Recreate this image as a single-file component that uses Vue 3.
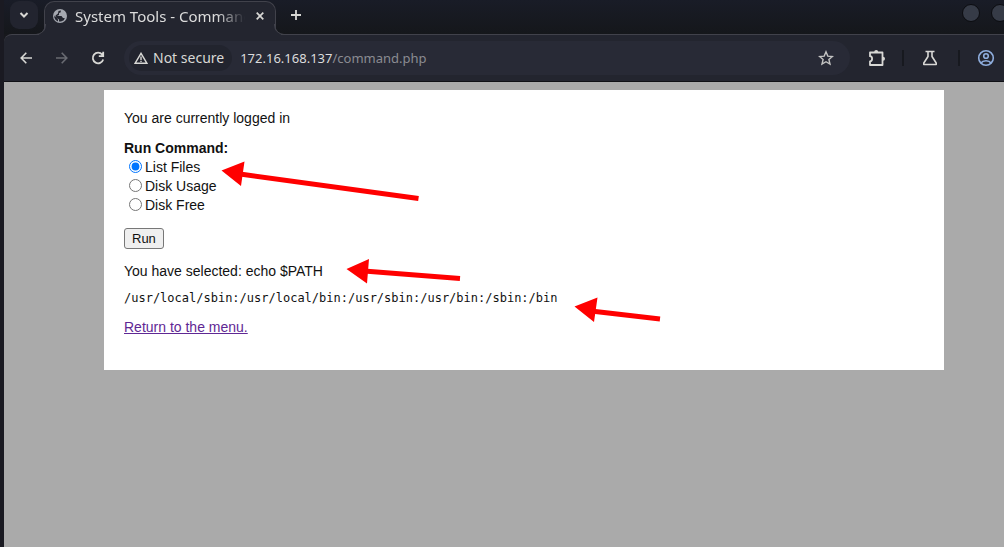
<script setup>
import { ref } from 'vue'

const commands = ['List Files', 'Disk Usage', 'Disk Free']
const selected = ref('List Files')
const address = ref('172.16.168.137/command.php')
</script>

<template>
  <div class="window">
    <header class="tabstrip">
      <button class="tab-search" type="button" aria-label="Search tabs">
        <svg width="10" height="8" viewBox="0 0 10 8"><path d="M1.500 2l3.500 3.500L8.500 2" fill="none" stroke="currentColor" stroke-width="2" /></svg>
      </button>
      <div class="tab">
        <svg class="globe" width="14" height="14" viewBox="0 0 14 14">
          <circle cx="7" cy="7" r="7" fill="#a5a8b0" />
          <path d="M8 1.500L7.500 3.500 6 4v2L4 7h4.500l1.500 2h1.800l-1 2.200L8 12.500H6V10.500L4.500 9.500 1.500 6.500l-.2 2A5.700 5.700 0 0 0 5 12.400V10.500L3.500 8.500 2.500 6.500 5 4.500 5.500 2z" fill="#23252f" />
        </svg>
        <span class="tab-title">System Tools - Command</span>
        <button class="tab-close" type="button" aria-label="Close tab">
          <svg width="8" height="8" viewBox="0 0 8 8"><path d="M.7.7l6.600 6.600M7.300.7L.7 7.300" stroke="currentColor" stroke-width="1.700" /></svg>
        </button>
      </div>
      <button class="new-tab" type="button" aria-label="New tab">
        <svg width="10" height="10" viewBox="0 0 10 10"><path d="M5 0v10M0 5h10" stroke="currentColor" stroke-width="1.800" /></svg>
      </button>
      <div class="window-controls">
        <button type="button" aria-label="Minimize"></button>
        <button type="button" aria-label="Maximize"></button>
      </div>
    </header>

    <nav class="toolbar">
      <div class="nav-buttons">
        <button type="button" aria-label="Back">
          <svg width="12" height="12" viewBox="0 0 12 12"><path d="M12 6H1.500M6.300.8L1.200 6l5.100 5.200" fill="none" stroke="currentColor" stroke-width="1.600" /></svg>
        </button>
        <button class="off" type="button" aria-label="Forward" disabled>
          <svg width="12" height="12" viewBox="0 0 12 12"><path d="M0 6h10.500M5.700.8L10.800 6l-5.100 5.200" fill="none" stroke="currentColor" stroke-width="1.600" /></svg>
        </button>
        <button type="button" aria-label="Reload">
          <svg width="14" height="14" viewBox="0 0 14 14"><path d="M12.200 8.500A5.300 5.300 0 1 1 11.200 3.600L12 4.500M12.200.8V5.200H7.800" fill="none" stroke="currentColor" stroke-width="1.800" /></svg>
        </button>
      </div>
      <div class="omnibox">
        <button class="security" type="button">
          <svg width="14" height="12" viewBox="0 0 14 12"><path d="M7 1.300L1.200 11.200h11.600zM7 4.500v3.500M7 8.800v1.300" fill="none" stroke="currentColor" stroke-width="1.400" /></svg>
          Not secure
        </button>
        <div class="address" role="textbox" aria-label="Address">{{ address.split('/')[0] }}<span>/{{ address.split('/')[1] }}</span></div>
        <button class="star" type="button" aria-label="Bookmark this page">
          <svg width="16" height="16" viewBox="0 0 16 16"><path d="M8 1.800l1.800 4.300 4.600.4-3.500 3 1.100 4.600L8 11.700l-4 2.400 1.100-4.600-3.500-3 4.600-.4z" fill="none" stroke="currentColor" stroke-width="1.400" /></svg>
        </button>
      </div>
      <div class="actions">
        <button type="button" aria-label="Extensions">
          <svg width="18" height="18" viewBox="0 0 18 18"><path d="M2 3.500h12.500v12.500H2v-3.700c2.800-.2 2.800-4.900 0-5.100z" fill="none" stroke="currentColor" stroke-width="1.800" stroke-linejoin="round" /><path d="M6.200 3a2 2 0 0 1 4 0M15 7.700a2 2 0 0 1 0 4" fill="currentColor" /></svg>
        </button>
        <i class="divider"></i>
        <button type="button" aria-label="Labs">
          <svg width="16" height="16" viewBox="0 0 16 16"><path d="M3.500 1.500h9M6 1.500V6.500L1.800 13v1.500h12.400V13L10 6.500v-5" fill="none" stroke="currentColor" stroke-width="1.600" stroke-linejoin="round" /></svg>
        </button>
        <i class="divider last"></i>
        <button class="profile" type="button" aria-label="Profile">
          <svg width="18" height="18" viewBox="0 0 18 18" fill="none" stroke="currentColor" stroke-width="1.600"><circle cx="9" cy="9" r="7.300" /><circle cx="9" cy="7" r="2.300" /><path d="M4 14c2-3 8-3 10 0" /></svg>
        </button>
      </div>
    </nav>

    <main class="page">
      <section class="panel">
        <p>You are currently logged in</p>
        <form @submit.prevent>
          <fieldset>
            <legend>Run Command:</legend>
            <label v-for="c in commands" :key="c">
              <input v-model="selected" type="radio" name="command" :value="c" />{{ c }}
            </label>
          </fieldset>
          <button class="run" type="submit">Run</button>
        </form>
        <p class="selected">You have selected: echo $PATH</p>
        <pre>/usr/local/sbin:/usr/local/bin:/usr/sbin:/usr/bin:/sbin:/bin</pre>
        <p><a href="#menu">Return to the menu.</a></p>
        <svg class="arrows" width="600" height="260" viewBox="0 0 600 260" aria-hidden="true">
          <g fill="#f00" stroke="#f00">
            <path d="M136 84L314.500 108.500M260 181L356 188.500M487 221L556 229" stroke-width="5" />
            <path stroke="none" d="M117.500 80.500L140.500 71.500 137 96zM242.500 179L265 169 263 193.500zM470.500 216.500L493.500 207.500 490 232z" />
          </g>
        </svg>
      </section>
    </main>
  </div>
</template>

<style>
body { background: #aaa; }
</style>

<style scoped>
* { box-sizing: border-box; }

.window {
  display: flex;
  flex-direction: column;
  min-height: 100vh;
  overflow: hidden;
  border-left: 4px solid #1a1a22;
  background: #17181d;
  color: #dcdcdc;
  font: 14px/20px "Noto Sans", sans-serif;
}
header button, nav button {
  display: flex;
  align-items: center;
  justify-content: center;
  flex: none;
  padding: 0;
  border: 0;
  background: none;
  color: #d8d8d5;
  font: inherit;
}
.tabstrip {
  display: flex;
  height: 34px;
  background: linear-gradient(#191c27, #15171b);
}
.tab-search.tab-search {
  width: 28px;
  height: 28px;
  margin: 1px 6px 0;
  border-radius: 9px;
  background: #22242f;
}
.tab {
  position: relative;
  z-index: 1;
  display: flex;
  align-items: center;
  flex: 0 1 232px;
  min-width: 0;
  height: 34px;
  margin-top: 1px;
  padding: 0 9px 6px 8px;
  border: 1px solid #41424b;
  border-bottom: 0;
  border-radius: 10px 10px 0 0;
  background: #23252f;
}
.tab::before, .tab::after {
  content: "";
  position: absolute;
  bottom: 0;
  width: 10px;
  height: 10px;
  border-bottom: 1px solid #41424b;
}
.tab::before {
  left: -10px;
  border-right: 1px solid #41424b;
  border-bottom-right-radius: 10px;
  box-shadow: 4px 4px 0 #23252f;
  clip-path: inset(0 -1px 0 0);
}
.tab::after {
  right: -10px;
  border-left: 1px solid #41424b;
  border-bottom-left-radius: 10px;
  box-shadow: -4px 4px 0 #23252f;
  clip-path: inset(0 0 0 -1px);
}
.globe { flex: none; }
.tab-title {
  flex: 1;
  min-width: 0;
  margin: 0 9px 0 8px;
  overflow: hidden;
  font-size: 15px;
  white-space: nowrap;
  mask-image: linear-gradient(to right, #000 calc(100% - 28px), transparent);
}
.tab-close.tab-close { width: 12px; height: 20px; }
.new-tab.new-tab { width: 20px; height: 30px; margin-left: 10px; }
.window-controls {
  display: flex;
  gap: 11px;
  margin: 4px -5px 0 auto;
}
.window-controls button {
  width: 18px;
  height: 18px;
  border: 1px solid #0b0c10;
  border-radius: 50%;
  background: #363b47;
}
.toolbar {
  display: flex;
  align-items: center;
  height: 48px;
  padding-left: 12px;
  border-top: 1px solid #41424b;
  border-bottom: 1px solid #101116;
  border-top-left-radius: 8px;
  background: #23252f;
}
.nav-buttons { display: flex; gap: 16px; }
.nav-buttons button { width: 20px; height: 28px; }
.nav-buttons button.off { color: #696b72; }
.omnibox {
  display: flex;
  align-items: center;
  flex: 1;
  height: 34px;
  margin-left: 16px;
  padding: 0 15px 0 5px;
  border-radius: 17px;
  background: #282a36;
}
.omnibox .security {
  gap: 5px;
  height: 26px;
  padding: 0 8px 0 5px;
  border-radius: 13px;
  background: #22242e;
}
.address { flex: 1; margin-left: 8px; font-size: 13px; }
.address span { color: #8b8c92; }
.omnibox .star { width: 18px; color: #c4c4c3; }
.actions { display: flex; align-items: center; margin-left: 16px; }
.actions button { width: 22px; height: 28px; }
.divider { width: 2px; height: 16px; margin: 0 15px 0 14px; background: #17191f; }
.divider.last { margin: 0 17px; }
.actions .profile { width: 18px; margin-right: 9px; color: #8faede; }

.page {
  flex: 1;
  padding: 8px 60px 8px 100px;
  background: #aaa;
  color: #111;
  font: 14px/19px "Liberation Sans", Arial, sans-serif;
}
.panel {
  position: relative;
  padding: 19px 20px 33px;
  background: #fff;
}
p { margin: 0; }
form { margin: 11px 0; }
fieldset { margin: 0 0 13px; padding: 0; border: 0; }
legend { padding: 0; font-weight: bold; }
label { display: flex; align-items: center; gap: 3px; }
input { width: 13px; height: 13px; margin: 0 0 3px 5px; }
.run {
  display: block;
  height: 21px;
  padding: 0 7px;
  border: 1px solid #777;
  border-radius: 3px;
  background: #efefef;
  color: #111;
  font: 13px/19px "Liberation Sans", Arial, sans-serif;
}
.selected { margin-top: 13px; }
pre { margin: 10px 0 12px; font: 12px/15px "DejaVu Sans Mono", monospace; }
a { color: #5f2894; }
.arrows { position: absolute; top: 0; left: 0; }
</style>
